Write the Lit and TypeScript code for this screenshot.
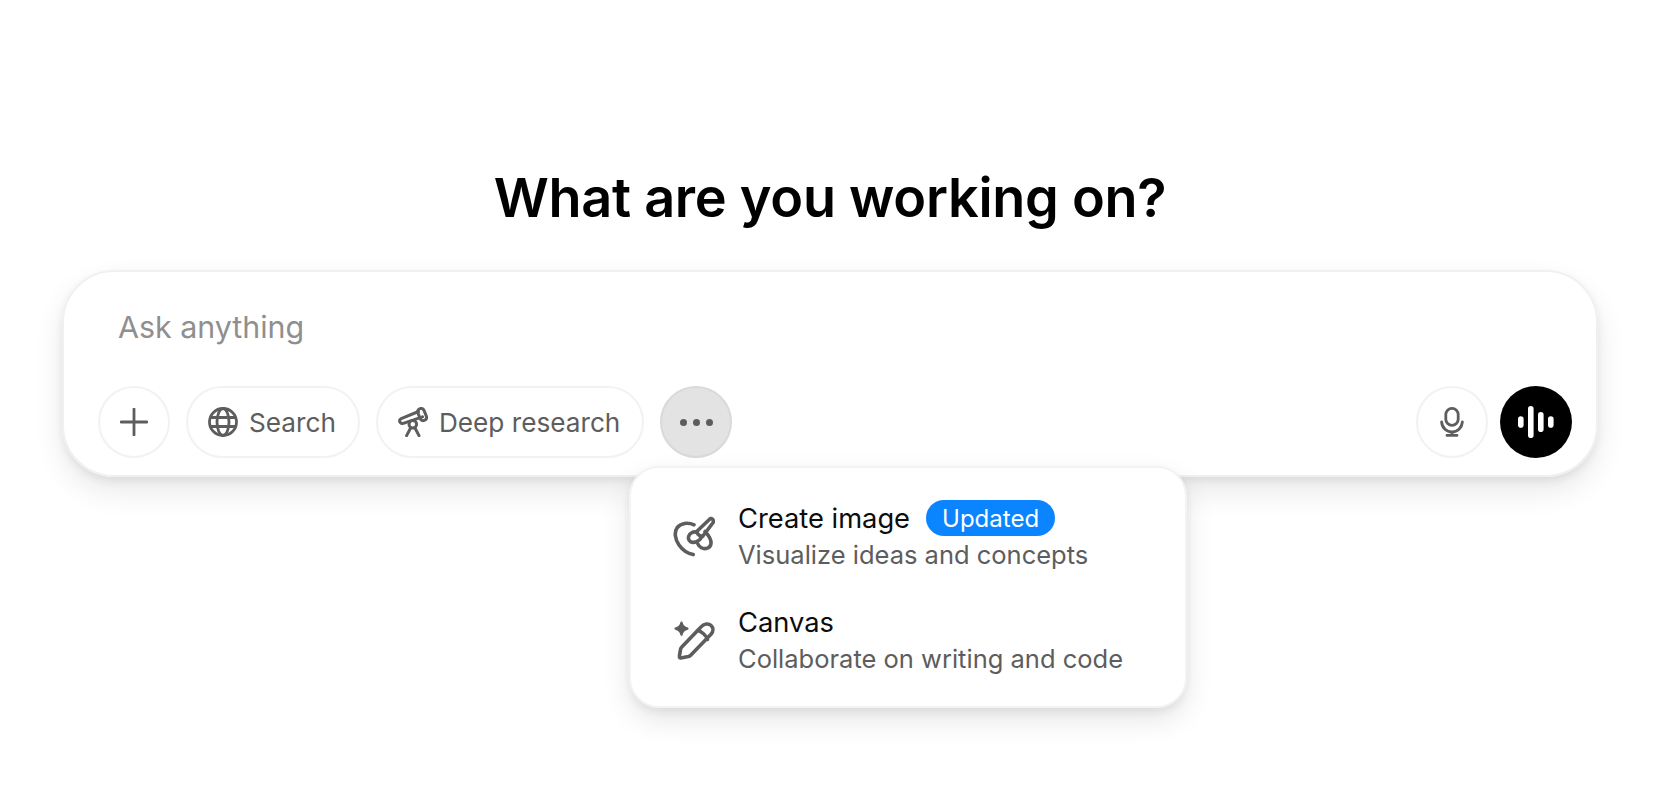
import { LitElement, html, css, svg } from "lit";
import { customElement } from "lit/decorators.js";

const plusIcon = svg`<path d="M14 1v26M1 14h26" fill="none" stroke="currentColor" stroke-width="2.8" stroke-linecap="round"/>`;

const globeIcon = svg`<g fill="none" stroke="currentColor" stroke-width="2.8">
    <circle cx="15" cy="15" r="13.5"/>
    <ellipse cx="15" cy="15" rx="6" ry="13.5"/>
    <path d="M2 10.500h26M2 19.500h26"/>
</g>`;

const telescopeIcon = svg`<g fill="none" stroke="currentColor" stroke-width="3" stroke-linecap="round" stroke-linejoin="round">
    <path d="M20.500 4.500 3.200 11.600c-1.500.7-2 2.200-1.300 3.500.7 1.200 2 1.700 3.400 1.200l19.200-6.500"/>
    <rect x="20.800" y="1.400" width="6.600" height="12.400" rx="3" transform="rotate(-22 24 7.500)"/>
    <circle cx="14.800" cy="17.200" r="3.800"/>
    <path d="M12.600 21 8.600 28.600M17 21l4 7.600"/>
</g>`;

const micIcon = svg`<g fill="none" stroke="currentColor" stroke-width="2.8" stroke-linecap="round">
    <rect x="5.800" y="1.400" width="12.400" height="17" rx="6.200"/>
    <path d="M1.600 15c.6 6 5 10 10.400 10s9.800-4 10.400-10M12 25v3M7 28.400h10"/>
</g>`;

const voiceIcon = svg`<g fill="#fff">
    <rect x="0" y="10.300" width="5.600" height="11.400" rx="2.800"/>
    <rect x="10" y="0" width="5.600" height="32" rx="2.800"/>
    <rect x="20" y="6" width="5.600" height="20" rx="2.800"/>
    <rect x="30" y="10.300" width="5.600" height="11.400" rx="2.800"/>
</g>`;

const paletteIcon = svg`<g fill="none" stroke="currentColor" stroke-width="3.600" stroke-linecap="round" stroke-linejoin="round">
    <path d="M21 8.800C15 6 7.600 7 4.200 11.600 1 16 2 23.400 6 29c3.200 4.600 8.400 8.400 14.200 9.600"/>
    <path d="M32 15.500c3.200 3.400 6.500 7.600 6 12-.5 4.800-6 6.200-9.600 4.200-1.800-1-3-2.400-3.600-3.800"/>
    <path d="M36.600 3.200 24.500 14.800c-.8.800-.8 2 0 2.800l2.800 2.600c.8.700 1.900.6 2.600-.2L39.800 7c1.700-2.400-1-5.800-3.200-3.800z"/>
    <path d="M24.200 16.400c-3.600-1.400-7.600.4-8.600 4-.8 3 1.200 5.800 4.200 6 3.800.3 7.800-2.400 9-6.200"/>
</g>`;

const canvasIcon = svg`<path d="M8.500 2.500c.8 3.600 2.500 5.300 6 6.100-3.500.8-5.200 2.500-6 6.100-.8-3.600-2.500-5.300-6-6.100 3.500-.8 5.200-2.500 6-6.100z" fill="currentColor" stroke="currentColor" stroke-width="2.200" stroke-linejoin="round"/>
<g fill="none" stroke="currentColor" stroke-width="3.600" stroke-linecap="round" stroke-linejoin="round">
    <path d="M27.500 7.400 8.800 27c-.7.700-1.100 1.500-1.300 2.400l-1.100 7c-.2 1.100.5 1.700 1.500 1.500l7.400-1.300c1-.2 1.700-.6 2.400-1.300l20.300-21c2.700-3 2.400-6.600.1-8.800-2.600-2.400-6.900-2.200-10.600 1.900z"/>
    <path d="M25 10.500c3 .6 8.500 5 9.500 9"/>
</g>`;

@customElement("menu-item")
export class MenuItem extends LitElement
{
    static properties =
    {
        title: { type: String },
        sub: { type: String },
        badge: { type: String }
    };

    declare title: string;
    declare sub: string;
    declare badge: string;

    static styles = css`
        :host
        {
            display: flex;
            align-items: center;
            gap: 23px;
            height: 104px;
            padding: 0 0 0 42px;
        }

        .icon
        {
            display: flex;
            width: 42px;
            color: #5d5d5d;
        }

        .title
        {
            display: flex;
            align-items: center;
            gap: 16px;
            height: 34px;
            font-size: 27.3px;
            color: #0d0d0d;
        }

        .badge
        {
            display: flex;
            align-items: center;
            height: 36px;
            padding: 0 16px;
            border-radius: 18px;
            background: #0a84ff;
            color: #fff;
            font-size: 24px;
        }

        .sub
        {
            height: 36px;
            margin-top: 2px;
            line-height: 36px;
            font-size: 25.5px;
            color: #5d5d5d;
            white-space: nowrap;
        }
    `;

    render ()
    {
        return html`
            <div class="icon"><slot></slot></div>
            <div>
                <div class="title">
                    ${this.title}
                    ${this.badge ? html`<span class="badge">${this.badge}</span>` : ""}
                </div>
                <div class="sub">${this.sub}</div>
            </div>
        `;
    }
}

@customElement("app-root")
export class AppRoot extends LitElement
{
    static styles = css`
        :host
        {
            display: block;
            height: 806px;
            box-sizing: border-box;
            padding: 0 72px 0 62px;
            background: #fff;
            font-family: Inter, "Liberation Sans", sans-serif;
            overflow: hidden;
        }

        h1
        {
            margin: 0;
            padding-top: 163px;
            height: 107px;
            line-height: 70px;
            font-size: 54px;
            font-weight: 600;
            letter-spacing: -0.27px;
            text-align: center;
            color: #000;
        }

        .composer
        {
            position: relative;
            box-sizing: border-box;
            height: 207px;
            padding: 0 24px 17px 34px;
            border: 2px solid #f0f0f0;
            border-radius: 52px;
            box-shadow: 0 4px 8px rgba(0, 0, 0, 0.07), 0 14px 30px rgba(0, 0, 0, 0.09);
            display: flex;
            flex-direction: column;
            justify-content: space-between;
        }

        .placeholder
        {
            padding: 35px 0 0 20px;
            line-height: 40px;
            font-size: 30.4px;
            color: #8f8f8f;
        }

        .tools
        {
            display: flex;
            align-items: center;
            gap: 16px;
        }

        .spacer
        {
            flex: 1;
        }

        .btn
        {
            box-sizing: border-box;
            display: flex;
            align-items: center;
            justify-content: center;
            gap: 11px;
            height: 72px;
            min-width: 72px;
            border: 2px solid #f2f2f2;
            border-radius: 36px;
            color: #5d5d5d;
            font-size: 26.2px;
            font-weight: 400;
        }

        .pill
        {
            padding: 0 22px 0 20px;
        }

        .more
        {
            background: #e3e3e3;
            border-color: #d9d9d9;
            gap: 6px;
        }

        .dot
        {
            width: 7px;
            height: 7px;
            border-radius: 50%;
            background: #5d5d5d;
        }

        .voice
        {
            background: #000;
            border: 0;
            margin-left: -4px;
        }

        .menu
        {
            position: absolute;
            left: 565px;
            top: 194px;
            box-sizing: border-box;
            width: 558px;
            height: 242px;
            padding: 17px 0;
            border: 2px solid #f3f3f3;
            border-radius: 30px;
            background: #fff;
            box-shadow: 0 4px 8px rgba(0, 0, 0, 0.06), 0 12px 28px rgba(0, 0, 0, 0.1);
        }
    `;

    render ()
    {
        return html`
            <h1>What are you working on?</h1>
            <div class="composer">
                <div class="placeholder">Ask anything</div>
                <div class="tools">
                    <div class="btn"><svg width="28" height="28" viewBox="0 0 28 28">${plusIcon}</svg></div>
                    <div class="btn pill"><svg width="30" height="30" viewBox="0 0 30 30">${globeIcon}</svg>Search</div>
                    <div class="btn pill"><svg width="30" height="30" viewBox="0 0 30 30">${telescopeIcon}</svg>Deep research</div>
                    <div class="btn more"><span class="dot"></span><span class="dot"></span><span class="dot"></span></div>
                    <div class="spacer"></div>
                    <div class="btn"><svg width="24" height="30" viewBox="0 0 24 30">${micIcon}</svg></div>
                    <div class="btn voice"><svg width="36" height="32" viewBox="0 0 36 32">${voiceIcon}</svg></div>
                </div>
                <div class="menu">
                    <menu-item title="Create image" badge="Updated" sub="Visualize ideas and concepts">
                        <svg width="42" height="42" viewBox="0 0 42 42">${paletteIcon}</svg>
                    </menu-item>
                    <menu-item title="Canvas" sub="Collaborate on writing and code">
                        <svg width="42" height="42" viewBox="0 0 42 42">${canvasIcon}</svg>
                    </menu-item>
                </div>
            </div>
        `;
    }
}
